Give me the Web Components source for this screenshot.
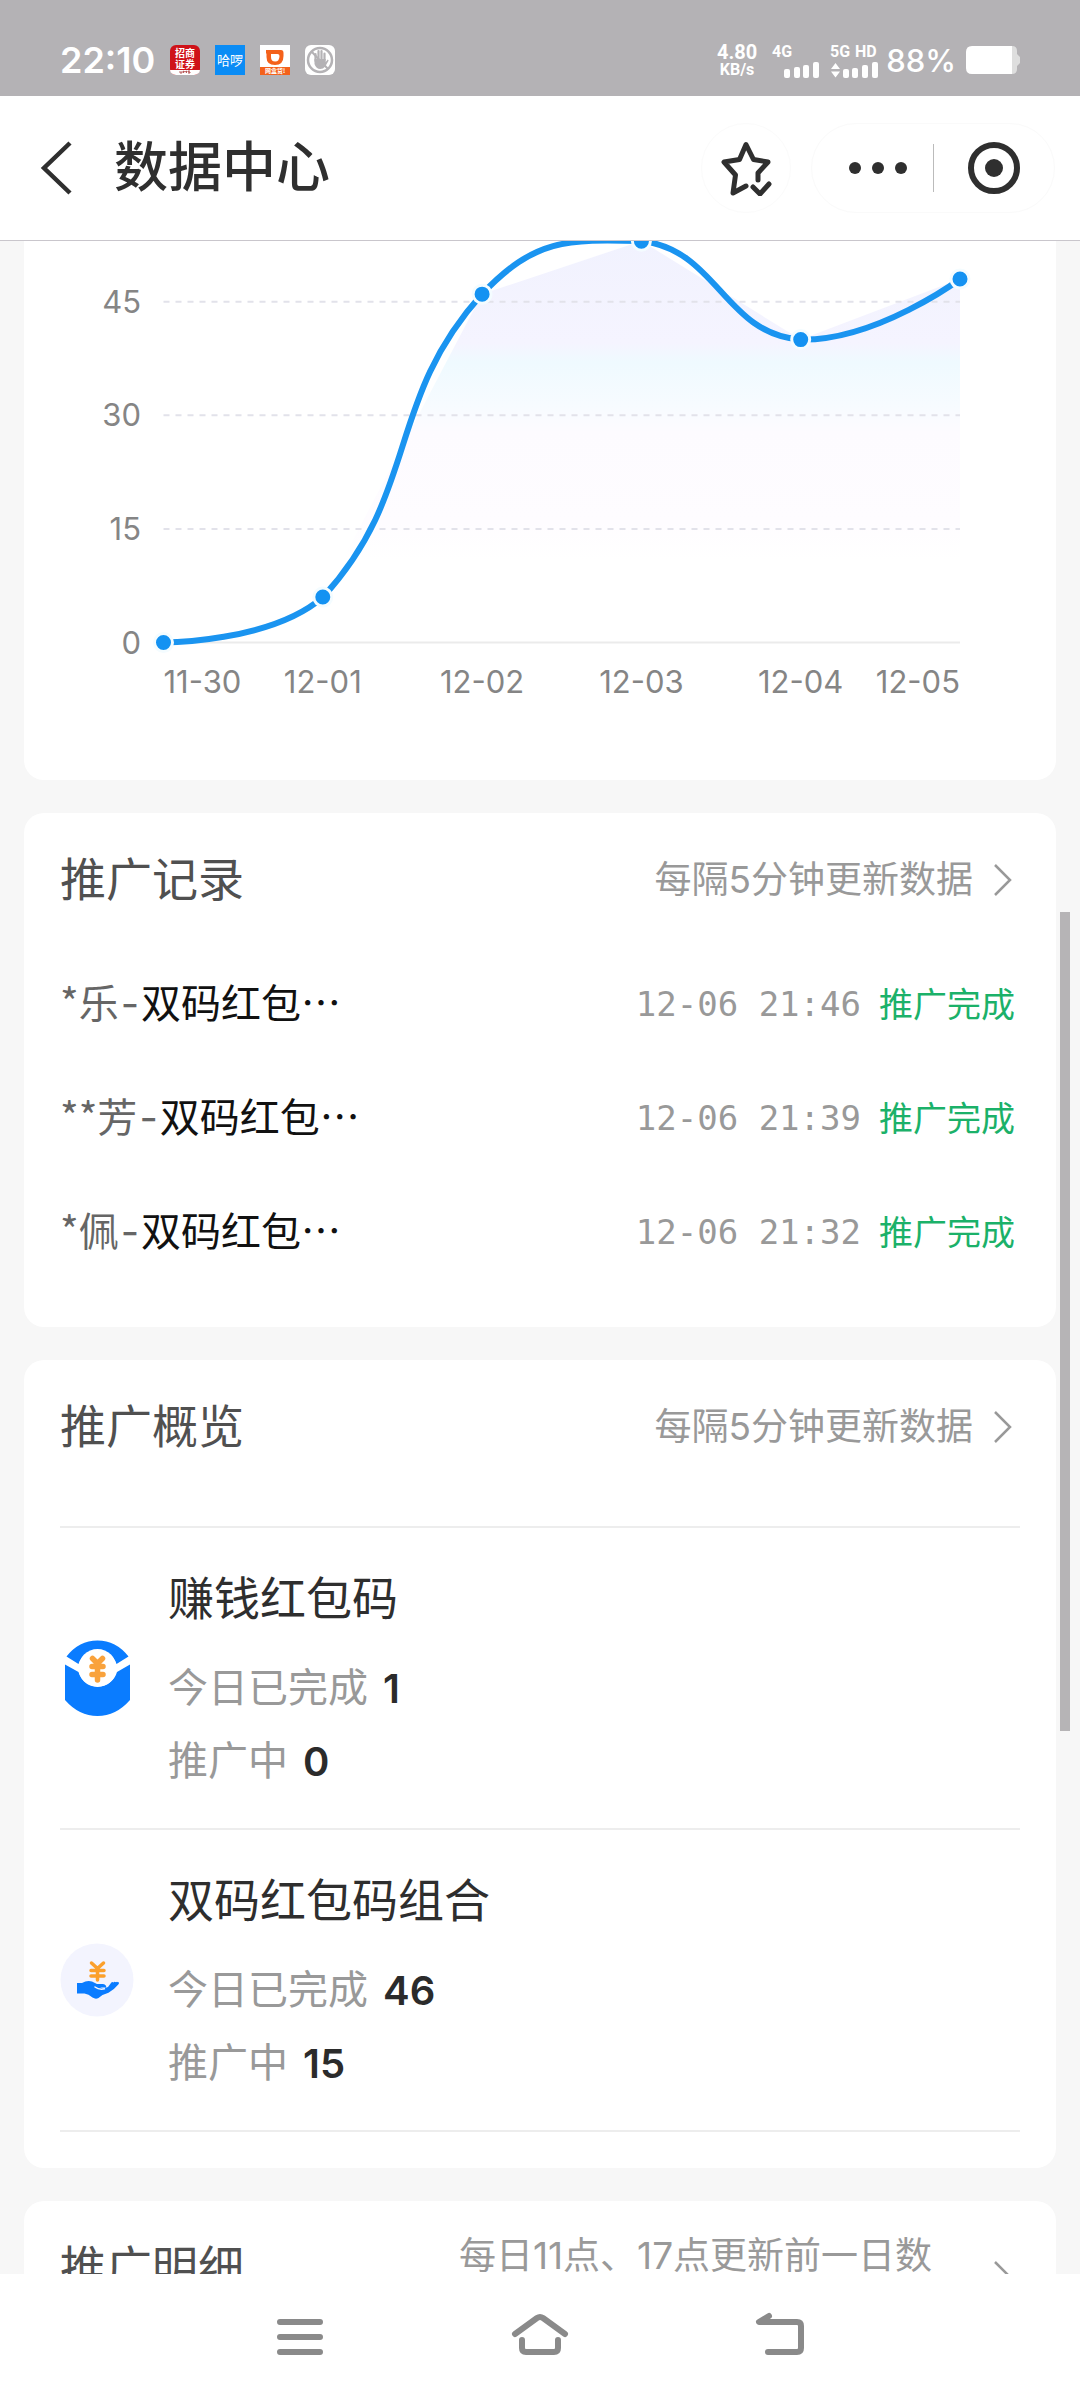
<!DOCTYPE html>
<html lang="zh-CN">
<head>
<meta charset="utf-8">
<meta name="viewport" content="width=device-width">
<title>数据中心</title>
<style>
html, body { margin: 0; height: 100%; }
body { font-family: Inter, "Noto Sans CJK SC", sans-serif; background: #f7f7f7; }
</style>
</head>
<body>
<data-center-page></data-center-page>

<script>
const define = (name, html, setup) => {
  const template = document.createElement('template');
  template.innerHTML = html;
  customElements.define(name, class extends HTMLElement {
    constructor() {
      super();
      this.attachShadow({ mode: 'open' }).append(template.content.cloneNode(true));
    }
    connectedCallback() {
      if (setup && !this.ready) { this.ready = true; setup(this, this.shadowRoot); }
    }
  });
};

/* ---------- system status bar ---------- */
define('status-bar', `
<style>
:host { display: flex; align-items: flex-end; justify-content: space-between; height: 96px; box-sizing: border-box; padding: 0 60px 16px; background: #b4b2b5; color: #fff; }
.side { display: flex; align-items: center; height: 40px; }
.apps { gap: 15px; }
.clock { font-size: 36px; font-weight: 600; line-height: 40px; }
.speed { display: grid; font: 700 20px/20px Roboto, sans-serif; text-align: center; margin-right: 15px; }
.speed small { font-size: 16px; font-weight: 700; line-height: 16px; }
.signal { display: block; margin-right: 8px; overflow: visible; }
.level { font-size: 31px; font-weight: 500; margin-right: 10px; }
svg { display: block; }
</style>
<div class="side apps">
  <span class="clock">22:10</span>
  <svg width="30" height="30" viewBox="0 0 30 30" font-family="Noto Sans CJK SC, sans-serif" font-weight="700" text-anchor="middle">
    <rect width="30" height="30" rx="6" fill="#cf1219"/>
    <path d="M0 25h30a6 5 0 0 1-6 5H6a6 5 0 0 1-6-5z" fill="#fff"/>
    <text x="15" y="12" font-size="10" fill="#fff">招商</text>
    <text x="15" y="23" font-size="10" fill="#fff">证券</text>
    <path d="M10 26v2h2v-2m1.500 2v-2l1.500 1 1.500-1v2m3.500-2h-2v1h2v1h-2" fill="none" stroke="#a33" stroke-width=".8"/>
  </svg>
  <svg width="30" height="30" viewBox="0 0 30 30">
    <rect width="30" height="30" fill="#0a8cf5"/>
    <text x="15" y="20" font-size="13" fill="#fff" text-anchor="middle" font-family="Noto Sans CJK SC, sans-serif">哈啰</text>
  </svg>
  <svg width="30" height="30" viewBox="0 0 30 30">
    <rect width="30" height="30" fill="#fff"/>
    <path fill-rule="evenodd" d="M6 5h15q2.500 0 2.500 3v3q0 9-8.500 9t-8.500-8V8.500H6zM11 9v3q0 4.500 4.200 4.500T19.500 11q0-2-2-2z" fill="#f4611b"/>
    <rect y="22" width="30" height="8" fill="#f4611b"/>
    <text x="15" y="28" font-size="6" fill="#fff" text-anchor="middle" font-weight="700" font-family="Noto Sans CJK SC, sans-serif">网盒贷!</text>
  </svg>
  <svg width="30" height="30" viewBox="0 0 30 30" fill="none">
    <rect width="30" height="30" rx="6" fill="#fff"/>
    <circle cx="15" cy="15" r="12" stroke="#b4b2b5" stroke-width="2.500"/>
    <path d="M7 7l16 17" stroke="#b4b2b5" stroke-width="2"/>
    <path d="M10.500 16V9m3 6V6m3 9V6m3 9V8.500" stroke="#b4b2b5" stroke-width="2.200" stroke-linecap="round"/>
    <path d="M9.500 14h11.200v3l2-2.500 1 1-3.500 6q-2 2.500-5 2.500-4 0-5.700-5z" fill="#b4b2b5"/>
  </svg>
</div>
<div class="side">
  <div class="speed">4.80<small>KB/s</small></div>
  <svg class="signal" width="50" height="40" viewBox="0 -4 50 40" fill="#fff">
    <text x="0" y="13" font-family="Roboto, sans-serif" font-size="16" font-weight="700">4G</text>
    <rect x="12" y="25" width="6" height="9" rx="2"/><rect x="22" y="23" width="6" height="11" rx="2"/>
    <rect x="31" y="21" width="6" height="13" rx="2"/><rect x="41" y="18" width="6" height="16" rx="2"/>
  </svg>
  <svg class="signal" width="48" height="40" viewBox="0 -4 48 40" fill="#fff">
    <text x="0" y="13" font-family="Roboto, sans-serif" font-size="16" font-weight="700">5G</text>
    <text x="25" y="13" font-family="Roboto, sans-serif" font-size="16" font-weight="700">HD</text>
    <path d="M1 25l4.500-6 4.500 6zM1 27.500l4.500 6 4.500-6z"/>
    <rect x="13" y="25" width="6" height="9" rx="2"/><rect x="22" y="24" width="6" height="10" rx="2"/>
    <rect x="32" y="21" width="6" height="13" rx="2"/><rect x="42" y="18" width="6" height="16" rx="2"/>
  </svg>
  <span class="level">88%</span>
  <svg width="54" height="28" viewBox="0 0 54 28">
    <path d="M44 0h2q5 0 5 5v3l3 3v6l-3 3v3q0 5-5 5h-2z" fill="#dedede"/>
    <path d="M6 0h40v28H6q-6 0-6-6V6q0-6 6-6z" fill="#fff"/>
  </svg>
</div>`);

/* ---------- page title bar ---------- */
define('title-bar', `
<style>
:host { display: flex; align-items: center; height: 145px; box-sizing: border-box; padding: 0 25px 0 32px; background: #fff; border-bottom: 1px solid #c9c6cc; }
button { border: 0; padding: 0; margin: 0; background: none; display: grid; place-items: center; }
h1 { flex: 1; margin: 0 0 0 30px; font-size: 54px; font-weight: 500; line-height: 72px; color: #2f2f2f; }
.star { width: 90px; height: 90px; border-radius: 45px; border: 1px solid #fbfbfb; margin-right: 20px; }
.capsule { display: flex; align-items: center; width: 244px; height: 90px; box-sizing: border-box; border: 1px solid #fafafa; border-radius: 45px; }
.capsule button { flex: 1 1 50%; height: 88px; }
.capsule button:first-child { padding-left: 12px; }
.capsule i { width: 1px; height: 48px; background: #bbb; }
svg { display: block; }
</style>
<button aria-label="返回"><svg width="52" height="56" viewBox="0 0 52 56"><path d="M38 3L12 28l26 25" fill="none" stroke="#2f2f2f" stroke-width="4.500"/></svg></button>
<h1><slot></slot></h1>
<button class="star" aria-label="收藏"><svg width="52" height="56" viewBox="0 0 52 56" fill="none" stroke="#2f2f2f" stroke-width="5" stroke-linejoin="round" stroke-linecap="round">
  <path d="M26 46l-13 7 2.500-18L4 22l15.500-2.500L26 4.500l7.500 15L48 22 38 33v7"/>
  <path d="M33 47l7 7 9-10"/></svg></button>
<div class="capsule">
  <button aria-label="更多"><svg width="60" height="16" viewBox="0 0 60 16" fill="#2f2f2f"><circle cx="7" cy="8" r="6"/><circle cx="30" cy="8" r="6"/><circle cx="53" cy="8" r="6"/></svg></button>
  <i></i>
  <button aria-label="关闭"><svg width="54" height="54" viewBox="0 0 54 54"><circle cx="27" cy="27" r="23" fill="none" stroke="#2f2f2f" stroke-width="6"/><circle cx="27" cy="27" r="9" fill="#2f2f2f"/></svg></button>
</div>`);

/* ---------- trend chart: y axis in steps of 15, one point a day ---------- */
define('trend-chart', `
<style>
:host { display: block; background: #fff; border-radius: 0 0 20px 20px; overflow: hidden; }
svg { display: block; width: 100%; height: auto; }
text { font-family: Inter, sans-serif; font-size: 31px; font-weight: 400; fill: #858585; }
</style>
<svg viewBox="24 241 1032 539">
  <defs>
    <linearGradient id="fade" gradientUnits="userSpaceOnUse" x1="0" y1="241" x2="0" y2="560">
      <stop offset="0" stop-color="#f1f2fe"/><stop offset=".32" stop-color="#f5f4ff"/>
      <stop offset=".38" stop-color="#effaff"/><stop offset=".52" stop-color="#f7fbff"/>
      <stop offset=".6" stop-color="#fdfbff"/><stop offset=".88" stop-color="#fefcff"/><stop offset="1" stop-color="#fff"/>
    </linearGradient>
  </defs>
  <path fill="url(#fade)" d="M163.500 642.500L323 597L482 294.100L641.500 241L800.700 339.600L960 279V642.500z"/>
  <g id="grid" fill="none" stroke-width="2"></g>
  <path fill="none" stroke="#1a94f0" stroke-width="6" d="M163.500 642.500C163.500 642.500 271 642.500 323 597C420 491 385 402 482 294.100C534.500 239 566 239 641.500 241C718 250 724 334 800.700 339.600C876.500 341 960 279 960 279"/>
  <g id="dots" fill="#1492f2" stroke="#f4fcff" stroke-width="3"></g>
  <g id="labels"></g>
</svg>`, (host, root) => {
  const ns = 'http://www.w3.org/2000/svg';
  const add = (parent, tag, attrs, text) => {
    const el = document.createElementNS(ns, tag);
    for (const k in attrs) el.setAttribute(k, attrs[k]);
    if (text !== undefined) el.textContent = text;
    root.getElementById(parent).append(el);
  };
  const x = i => 163.5 + i * 159.3;
  const y = v => 642.5 - v * 7.573;
  for (const v of [0, 15, 30, 45]) {
    add('grid', 'path', { d: `M163.5 ${y(v)}H960`, stroke: v ? '#e2e2ea' : '#ebebeb', 'stroke-dasharray': v ? '6 6' : 'none' });
    add('labels', 'text', { x: 141, y: y(v) + 11, 'text-anchor': 'end' }, v);
  }
  [0, 6, 46, 53, 40, 48].forEach((v, i) => add('dots', 'circle', { cx: x(i), cy: y(v), r: 9 }));
  const days = ['11-30', '12-01', '12-02', '12-03', '12-04', '12-05'];
  days.forEach((d, i) => add('labels', 'text', {
    x: x(i), y: 693, 'text-anchor': i === 0 ? 'start' : i === days.length - 1 ? 'end' : 'middle'
  }, d));
});

/* ---------- white card with a title and a note that links on ---------- */
define('info-card', `
<style>
:host { display: block; background: #fff; border-radius: 20px; padding: 32px 36px 0; }
header { display: flex; align-items: center; justify-content: space-between; min-height: 68px; }
h2 { margin: 0; font-size: 46px; font-weight: 400; line-height: 68px; color: #505050; white-space: nowrap; }
a { display: flex; align-items: center; gap: 20px; padding: 2px 7px 0 0; color: #999; text-decoration: none; font-size: 37px; line-height: 42px; }
:host([narrow]) header { align-items: flex-start; }
:host([narrow]) a span { box-sizing: border-box; width: 514px; padding-right: 16px; }
svg { flex: none; display: block; }
</style>
<header>
  <h2></h2>
  <a href="#"><span></span><svg width="20" height="34" viewBox="0 0 20 34"><path d="M2 2l15 15L2 32" fill="none" stroke="#999" stroke-width="2.500"/></svg></a>
</header>
<slot></slot>`, (host, root) => {
  root.querySelector('h2').textContent = host.getAttribute('heading');
  root.querySelector('a span').textContent = host.getAttribute('note');
});

/* ---------- one promotion record ---------- */
define('record-row', `
<style>
:host { display: flex; align-items: center; height: 114px; padding-right: 5px; font-family: "Noto Sans CJK SC", sans-serif; }
.name { flex: 1; font-size: 40px; color: #666; white-space: nowrap; padding-bottom: 3px; }
.name i { font-style: normal; font-family: Inter, sans-serif; padding: 0 2px; }
.name b { font-weight: 400; color: #111; }
time { font-family: "DejaVu Sans Mono", monospace; font-size: 34px; color: #999; margin-right: 18px; padding-top: 3px; white-space: nowrap; }
.state { font-size: 34px; color: #1bb169; }
</style>
<div class="name"><span></span><i>-</i><b>双码红包…</b></div>
<time></time><span class="state">推广完成</span>`, (host, root) => {
  root.querySelector('.name span').textContent = host.getAttribute('who');
  root.querySelector('time').textContent = host.getAttribute('at');
});

/* ---------- one product of the overview ---------- */
define('product-item', `
<style>
:host { display: flex; align-items: center; gap: 34px; height: 300px; border-bottom: 2px solid #ededed; }
.icon { width: 74px; height: 76px; }
h3 { margin: 0 0 22px; font-size: 46px; font-weight: 400; line-height: 62px; color: #2e2e2e; }
dl { margin: 0; }
dl div { display: flex; align-items: center; gap: 15px; height: 73px; line-height: 70px; font-size: 40px; }
dt { color: #999; font-weight: 400; }
dd { margin: 0; padding-top: 2px; color: #2b2b2b; font-weight: 600; }
.text { padding-top: 8px; }
</style>
<div class="icon"><slot></slot></div>
<div class="text"><h3></h3>
<dl><div><dt>今日已完成</dt><dd class="done"></dd></div><div><dt>推广中</dt><dd class="active"></dd></div></dl></div>`, (host, root) => {
  root.querySelector('h3').textContent = host.getAttribute('name');
  root.querySelector('.done').textContent = host.getAttribute('done');
  root.querySelector('.active').textContent = host.getAttribute('active');
});

/* ---------- system navigation ---------- */
define('system-nav', `
<style>
:host { display: grid; grid-template-columns: repeat(3, 1fr); height: 126px; padding: 0 16.667%; background: #fff; }
button { border: 0; padding: 0; background: none; display: grid; place-items: center; }
svg { display: block; fill: none; stroke: #8a8a8a; stroke-width: 6; stroke-linecap: round; stroke-linejoin: round; }
</style>
<button aria-label="最近任务"><svg width="60" height="52" viewBox="0 0 60 52"><path d="M10 11h40M10 26h40M10 41h40"/></svg></button>
<button aria-label="主屏幕"><svg width="60" height="52" viewBox="0 0 60 52"><path d="M5 23L27 7q3-2 6 0l22 16M12 29v8q0 4 4 4h28q4 0 4-4v-8"/></svg></button>
<button aria-label="返回"><svg width="60" height="52" viewBox="0 0 60 52"><path d="M19 5L9 11h38q4 0 4 4v22q0 4-4 4H18"/></svg></button>`);

/* ---------- the whole page ---------- */
define('data-center-page', `
<style>
:host { display: flex; flex-direction: column; height: 100vh; overflow: hidden; }
main { position: relative; flex: 1; min-height: 0; overflow: hidden; padding: 0 24px; display: flex; flex-direction: column; gap: 33px; }
main > * { flex: none; }
.records { display: block; padding: 32px 0 40px; }
.products { margin: 66px 0 36px; border-top: 2px solid #ededed; }
.thumb { position: absolute; right: 10px; top: 671px; width: 10px; height: 819px; background: #b6b4b6; }
svg { display: block; }
</style>
<status-bar></status-bar>
<title-bar>数据中心</title-bar>
<main>
  <trend-chart></trend-chart>
  <info-card heading="推广记录" note="每隔5分钟更新数据">
    <div class="records">
      <record-row who="*乐" at="12-06 21:46"></record-row>
      <record-row who="**芳" at="12-06 21:39"></record-row>
      <record-row who="*佩" at="12-06 21:32"></record-row>
    </div>
  </info-card>
  <info-card heading="推广概览" note="每隔5分钟更新数据">
    <div class="products">
      <product-item name="赚钱红包码" done="1" active="0">
        <svg width="74" height="76" viewBox="0 0 74 76">
          <path d="M5 24.500L18.500 32a20 20 0 0 0 38.500 0L70 24.500V60Q56 76 37.500 76T5 60z" fill="#0a7cff"/>
          <path d="M6.500 16.500Q19 .5 37.500.5T68.500 16.500L56.500 24a20 20 0 0 0-38 0z" fill="#0a7cff"/>
          <circle cx="37.500" cy="28" r="19" fill="#fff"/>
          <path d="M32.500 18.500l5 5 5-5M32 26.500h11M32 34.500h11M37.500 24v16" fill="none" stroke="#f9a23c" stroke-width="5.500" stroke-linecap="round" stroke-linejoin="round"/>
        </svg>
      </product-item>
      <product-item name="双码红包码组合" done="46" active="15">
        <svg width="74" height="76" viewBox="0 0 74 76">
          <circle cx="37" cy="38" r="36.500" fill="#f3f4fe"/>
          <path d="M31.500 21l6 5.500 6-5.500M31 28.500h13M31 34h13M37.500 27v11" fill="none" stroke="#fba02c" stroke-width="3.500" stroke-linecap="round"/>
          <path d="M17 41h5q5-3 10-1.500l5 2.500h6q4 1 3 3.500h-6q4 1.500 8-.5l3-4q1-1.500 2.500-.5 1-1.500 2.500-.2 1-1 2 0 2-.5.500 2-5 6-10 8.500-6 1.500-10 5.200-3 1.500-6-.5-4-3.500-8-4H17z" fill="#0a7cff"/>
          <path d="M35 45q4 3 9.500 1.800" fill="none" stroke="#f3f4fe" stroke-width="1.500" stroke-linecap="round"/>
        </svg>
      </product-item>
    </div>
  </info-card>
  <info-card narrow heading="推广明细" note="每日11点、17点更新前一日数据"></info-card>
  <div class="thumb"></div>
</main>
<system-nav></system-nav>`);
</script>
</body>
</html>
